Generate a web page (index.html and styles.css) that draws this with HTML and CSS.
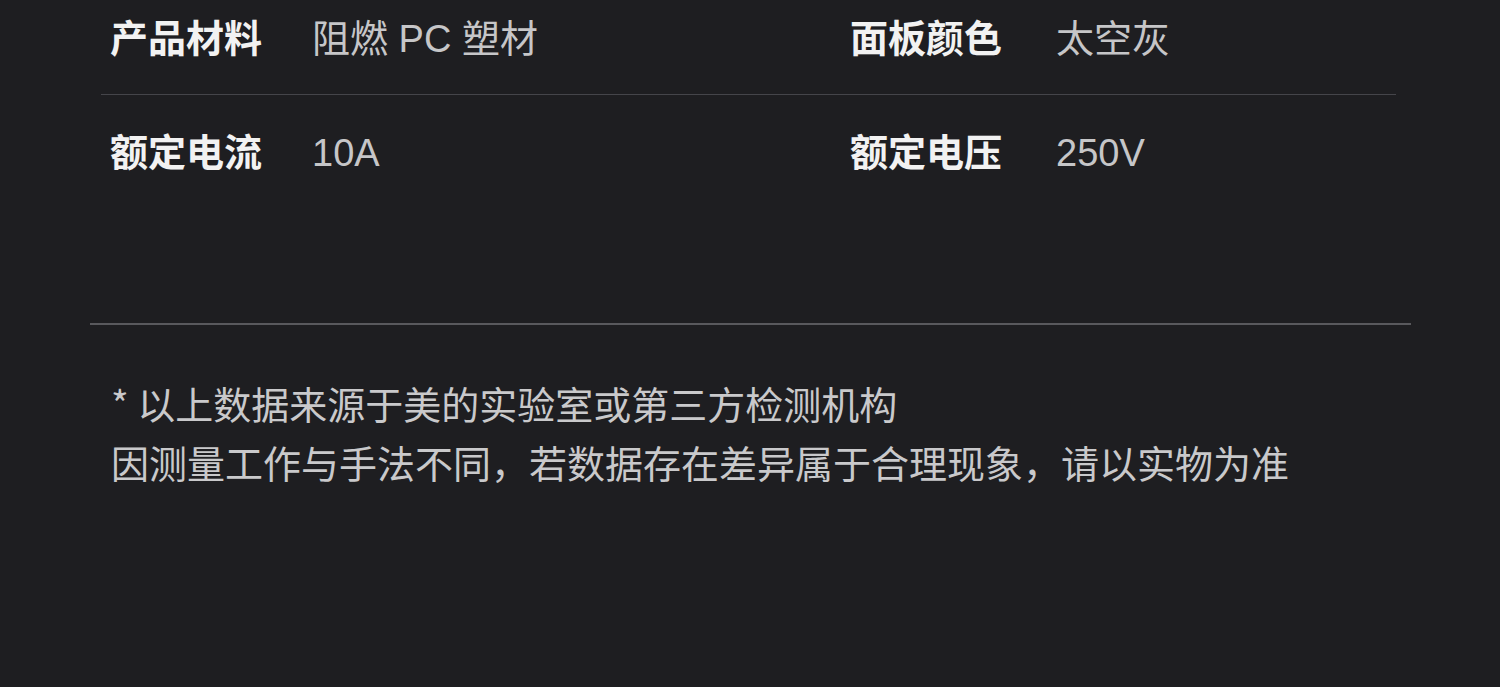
FILE: index.html
```html
<!DOCTYPE html>
<html lang="zh-CN">
<head>
<meta charset="utf-8">
<title>规格参数</title>
<link rel="stylesheet" href="styles.css">
</head>
<body>
<div class="page">
  <div class="specs">
    <div class="row">
      <div class="cell"><span class="label">产品材料</span><span class="value">阻燃 PC 塑材</span></div>
      <div class="cell cell-right"><span class="label">面板颜色</span><span class="value">太空灰</span></div>
    </div>
    <div class="row">
      <div class="cell"><span class="label">额定电流</span><span class="value">10A</span></div>
      <div class="cell cell-right"><span class="label">额定电压</span><span class="value">250V</span></div>
    </div>
  </div>
  <div class="rule"></div>
  <div class="note">
    <p>* 以上数据来源于美的实验室或第三方检测机构</p>
    <p>因测量工作与手法不同，若数据存在差异属于合理现象，请以实物为准</p>
  </div>
</div>
</body>
</html>
```
FILE: styles.css
```css
html, body {
  margin: 0;
  padding: 0;
  background: #1e1e21;
  height: 100%;
}
body {
  font-family: "Liberation Sans", "Noto Sans CJK SC", sans-serif;
  overflow: hidden;
}
.page {
  padding: 0 89px 0 90px;
}
.specs {
  margin: 0 15px 0 11px;
}
.row {
  display: grid;
  grid-template-columns: 740px 1fr;
  padding: 32px 0 36px 9px;
  border-bottom: 1px solid #45454a;
}
.row:first-child {
  padding-top: 13px;
  padding-bottom: 32px;
}
.row:last-child {
  border-bottom: none;
}
.cell {
  display: flex;
  align-items: baseline;
  line-height: 46px;
}
.label {
  width: 202px;
  font-size: 38px;
  font-weight: 700;
  color: #f2f2f2;
  font-family: "Noto Sans CJK SC", sans-serif;
}
.cell-right .label {
  width: 206px;
}
.value {
  font-size: 38px;
  color: #c6c6c8;
}
.rule {
  margin-top: 111px;
  height: 2px;
  background: #59595d;
}
.note {
  padding: 48px 0 0 21px;
  font-family: "Noto Sans CJK SC", sans-serif;
  font-size: 38px;
  color: #c9c9cb;
}
.note p {
  margin: 0;
  line-height: 59px;
}
```
